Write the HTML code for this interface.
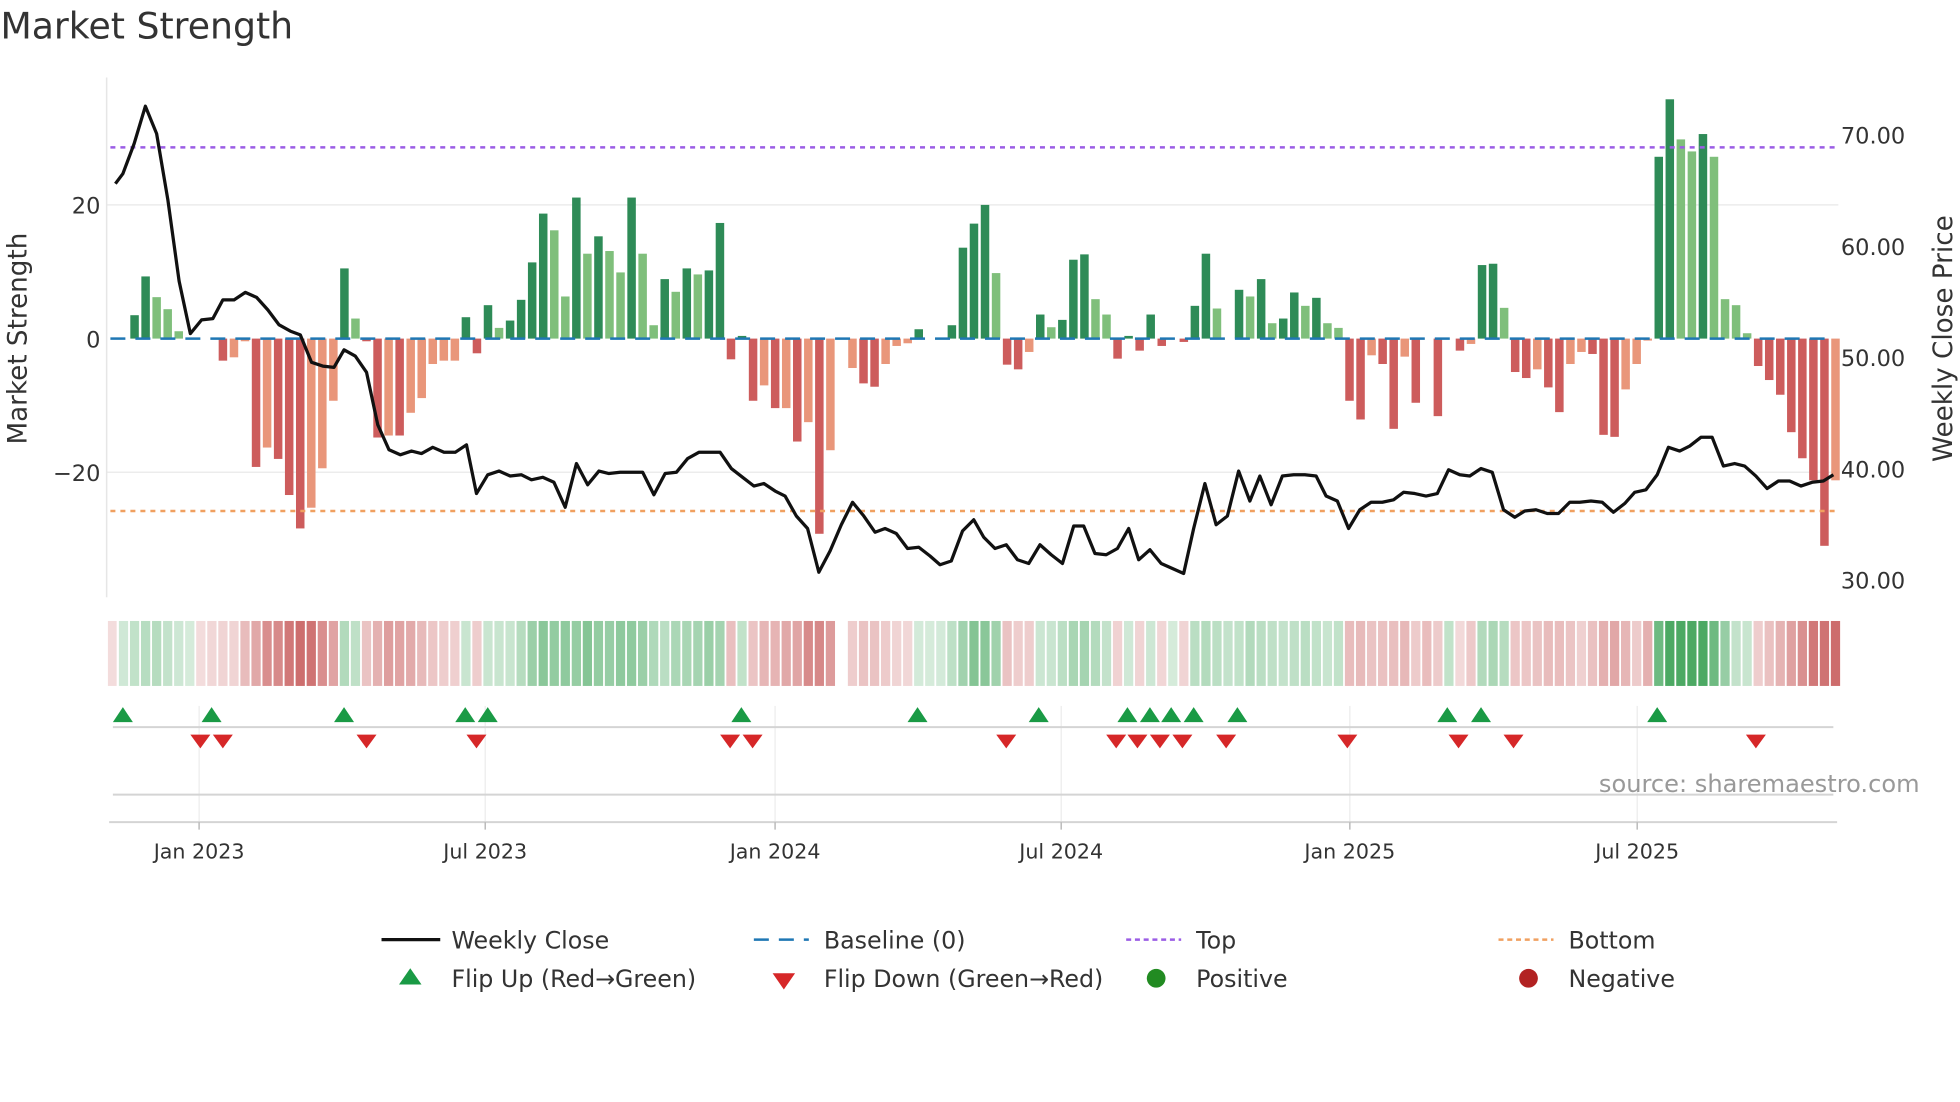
<!DOCTYPE html>
<html><head><meta charset="utf-8"><style>
html,body{margin:0;padding:0;background:#fff;}
svg{display:block;}
text{font-family:"DejaVu Sans","Liberation Sans",sans-serif;fill:#333;}
</style></head><body>
<svg id="s" width="1960" height="1102" viewBox="0 0 1568 882" xmlns="http://www.w3.org/2000/svg">
<text x="0" y="31" font-size="29">Market Strength</text>
<line x1="85" y1="164" x2="1471" y2="164" stroke="#ececec" stroke-width="1.2"/>
<line x1="85" y1="378" x2="1471" y2="378" stroke="#ececec" stroke-width="1.2"/>
<line x1="85" y1="62" x2="85" y2="478" stroke="#e6e6e6" stroke-width="1.2"/>
<g id="bars"></g>
<line x1="88" y1="271" x2="1468" y2="271" stroke="#1f77b4" stroke-width="2" stroke-dasharray="12,8"/>
<line x1="88" y1="118" x2="1468" y2="118" stroke="#9b5de5" stroke-width="2" stroke-dasharray="4,4"/>
<line x1="88" y1="409" x2="1468" y2="409" stroke="#f0a060" stroke-width="2" stroke-dasharray="4,4"/>
<polyline id="price" fill="none" stroke="#111" stroke-width="2.6" stroke-linejoin="round" points=""/>
<text x="80" y="171" font-size="18" text-anchor="end">20</text>
<text x="80" y="278" font-size="18" text-anchor="end">0</text>
<text x="80" y="385" font-size="18" text-anchor="end">−20</text>
<text x="1473" y="115" font-size="18">70.00</text>
<text x="1473" y="204" font-size="18">60.00</text>
<text x="1473" y="293" font-size="18">50.00</text>
<text x="1473" y="382" font-size="18">40.00</text>
<text x="1473" y="471" font-size="18">30.00</text>
<text transform="translate(21,271) rotate(-90)" font-size="21" text-anchor="middle">Market Strength</text>
<text transform="translate(1562,271) rotate(-90)" font-size="21" text-anchor="middle">Weekly Close Price</text>
<g id="strip"></g>
<g stroke="#ececec" stroke-width="1">
<line x1="159" y1="565" x2="159" y2="658"/><line x1="388" y1="565" x2="388" y2="658"/>
<line x1="620" y1="565" x2="620" y2="658"/><line x1="849" y1="565" x2="849" y2="658"/>
<line x1="1080" y1="565" x2="1080" y2="658"/><line x1="1310" y1="565" x2="1310" y2="658"/>
</g>
<line x1="90" y1="582" x2="1467" y2="582" stroke="#d4d4d4" stroke-width="1.6"/>
<line x1="90" y1="636" x2="1467" y2="636" stroke="#d4d4d4" stroke-width="1.6"/>
<line x1="87" y1="658" x2="1470" y2="658" stroke="#d4d4d4" stroke-width="1.6"/>
<g stroke="#bbb" stroke-width="1.2">
<line x1="159" y1="658" x2="159" y2="664"/><line x1="388" y1="658" x2="388" y2="664"/>
<line x1="620" y1="658" x2="620" y2="664"/><line x1="849" y1="658" x2="849" y2="664"/>
<line x1="1080" y1="658" x2="1080" y2="664"/><line x1="1310" y1="658" x2="1310" y2="664"/>
</g>
<g id="flips"></g>
<text x="1536" y="634" font-size="19.3" text-anchor="end" style="fill:#999">source: sharemaestro.com</text>
<g font-size="16.5" text-anchor="middle">
<text x="159" y="687">Jan 2023</text><text x="388" y="687">Jul 2023</text>
<text x="620" y="687">Jan 2024</text><text x="849" y="687">Jul 2024</text>
<text x="1080" y="687">Jan 2025</text><text x="1310" y="687">Jul 2025</text>
</g>
<line x1="305" y1="752" x2="352" y2="752" stroke="#111" stroke-width="2.6"/>
<text x="361" y="759" font-size="19">Weekly Close</text>
<line x1="603" y1="752" x2="647" y2="752" stroke="#1f77b4" stroke-width="2" stroke-dasharray="12,8"/>
<text x="659" y="759" font-size="19">Baseline (0)</text>
<line x1="901" y1="752" x2="945" y2="752" stroke="#9b5de5" stroke-width="2" stroke-dasharray="4,3"/>
<text x="957" y="759" font-size="19">Top</text>
<line x1="1199" y1="752" x2="1243" y2="752" stroke="#f0a060" stroke-width="2" stroke-dasharray="4,3"/>
<text x="1255" y="759" font-size="19">Bottom</text>
<polygon points="328,775 337,788 319,788" fill="#1a9a45"/>
<text x="361" y="790" font-size="19">Flip Up (Red→Green)</text>
<polygon points="618,779 636,779 627,792" fill="#d62728"/>
<text x="659" y="790" font-size="19">Flip Down (Green→Red)</text>
<circle cx="925" cy="783" r="7.5" fill="#228b22"/>
<text x="957" y="790" font-size="19">Positive</text>
<circle cx="1223" cy="783" r="7.5" fill="#b22222"/>
<text x="1255" y="790" font-size="19">Negative</text>
</svg>
<script>
var NS="http://www.w3.org/2000/svg";
function el(t,a,p){var e=document.createElementNS(NS,t);for(var k in a)e.setAttribute(k,a[k]);document.getElementById(p).appendChild(e);return e;}
var D=[[0,'g'],[3.5,'g'],[9.3,'g'],[6.2,'l'],[4.4,'l'],[1.1,'l'],[0,'g'],[0,'g'],[0,'g'],[-3.3,'r'],[-2.8,'s'],[-0.4,'s'],[-19.2,'r'],[-16.3,'s'],[-18,'r'],[-23.4,'r'],[-28.4,'r'],[-25.3,'s'],[-19.4,'s'],[-9.3,'s'],
[10.5,'g'],[3,'l'],[-0.4,'r'],[-14.8,'r'],[-14.5,'s'],[-14.5,'r'],[-11.1,'s'],[-8.9,'s'],[-3.8,'s'],[-3.3,'s'],[-3.3,'s'],[3.2,'g'],[-2.2,'r'],[5,'g'],[1.6,'l'],[2.7,'g'],[5.8,'g'],[11.4,'g'],[18.7,'g'],[16.2,'l'],
[6.3,'l'],[21.1,'g'],[12.7,'l'],[15.3,'g'],[13.1,'l'],[9.9,'l'],[21.1,'g'],[12.7,'l'],[2,'l'],[8.9,'g'],[7,'l'],[10.5,'g'],[9.6,'l'],[10.2,'g'],[17.3,'g'],[-3.1,'r'],[0.4,'g'],[-9.3,'r'],[-7,'s'],[-10.4,'r'],
[-10.4,'s'],[-15.4,'r'],[-12.5,'s'],[-29.2,'r'],[-16.7,'s'],[0,'g'],[-4.4,'s'],[-6.7,'r'],[-7.2,'r'],[-3.8,'s'],[-1.1,'s'],[-0.7,'s'],[1.4,'g'],[0,'g'],[0,'g'],[2,'g'],[13.6,'g'],[17.2,'g'],[20,'g'],[9.8,'l'],
[-3.9,'r'],[-4.6,'r'],[-2,'s'],[3.6,'g'],[1.7,'l'],[2.8,'g'],[11.8,'g'],[12.6,'g'],[5.9,'l'],[3.6,'l'],[-3,'r'],[0.4,'g'],[-1.8,'r'],[3.6,'g'],[-1.1,'r'],[0,'g'],[-0.5,'r'],[4.9,'g'],[12.7,'g'],[4.5,'l'],
[0,'g'],[7.3,'g'],[6.3,'l'],[8.9,'g'],[2.3,'l'],[3,'g'],[6.9,'g'],[4.9,'l'],[6.1,'g'],[2.3,'l'],[1.6,'l'],[-9.3,'r'],[-12.1,'r'],[-2.5,'s'],[-3.8,'r'],[-13.5,'r'],[-2.7,'s'],[-9.6,'r'],[0,'g'],[-11.6,'r'],
[0,'g'],[-1.8,'r'],[-0.8,'s'],[11,'g'],[11.2,'g'],[4.6,'l'],[-5,'r'],[-5.9,'r'],[-4.6,'s'],[-7.3,'r'],[-11,'r'],[-3.8,'s'],[-2,'s'],[-2.3,'r'],[-14.4,'r'],[-14.7,'r'],[-7.6,'s'],[-3.8,'s'],[-0.3,'s'],[27.2,'g'],
[35.8,'g'],[29.8,'l'],[28,'l'],[30.6,'g'],[27.2,'l'],[5.9,'l'],[5,'l'],[0.8,'l'],[-4.1,'r'],[-6.2,'r'],[-8.4,'r'],[-14,'r'],[-17.9,'r'],[-21.2,'r'],[-31,'r'],[-21.2,'s']];
var C={g:'#2e8b57',l:'#7fbf7b',r:'#cd5c5c',s:'#e9967a'};
var X0=98.5,SP=8.84,K=5.35;
D.forEach(function(d,i){var v=d[0];if(v==0)return;var h=Math.abs(v)*K;var x=X0+i*SP-3.4;
el('rect',{x:x,y:v>0?271-h:271,width:6.8,height:h,fill:C[d[1]]},'bars');});
var G=[[0,6],[20,21],[31,31],[33,54],[56,56],[72,79],[83,89],[91,91],[93,93],[95,95],[97,110],[120,120],[123,125],[139,147]];
function isG(i){for(var k=0;k<G.length;k++)if(i>=G[k][0]&&i<=G[k][1])return true;return false;}
for(var i=0;i<D.length;i++){if(i==65)continue;
var m=0,n=0;for(var j=i-1;j<=i+1;j++){if(j>=0&&j<D.length){m+=Math.abs(D[j][0]);n++;}}m=m/n;
var a=0.2+0.7*Math.min(1,m/28);var g=isG(i);
el('rect',{x:X0+i*SP-3.7,y:497,width:7.4,height:52,fill:g?'rgb(56,160,82)':'rgb(196,82,82)','fill-opacity':a.toFixed(2)},'strip');}
el('rect',{x:86,y:497,width:7,height:52,fill:'rgb(196,82,82)','fill-opacity':0.2},'strip');
var P="92,147 98,139 107,115 116,85 125,107 134,160 143,225 152,267 161,256 170,255 178,240 187,240 196,234 205,238 214,248 223,260 232,265 240,268 249,290 258,293 267,294 275,280 284,285 293,298 302,340 311,360 320,364 329,361 337,363 346,358 355,362 364,362 373,356 381,395 390,380 399,377 408,381 417,380 425,384 434,382 443,386 452,406 461,371 470,388 479,377 487,379 496,378 505,378 514,378 523,396 532,379 541,378 550,367 559,362 567,362 576,362 585,375 594,382 603,389 611,387 620,393 628,397 637,413 646,423 655,458 664,441 673,420 682,402 691,413 700,426 708,423 717,427 726,439 735,438 744,445 752,452 761,449 770,425 779,416 787,430 796,439 805,436 814,448 823,451 832,436 841,444 850,451 859,421 867,421 876,443 885,444 894,439 903,423 911,448 920,440 929,451 938,455 947,459 955,423 964,387 973,420 982,413 991,377 1000,401 1008,381 1017,404 1026,381 1035,380 1044,380 1053,381 1061,397 1070,401 1079,423 1088,408 1097,402 1106,402 1115,400 1123,394 1132,395 1141,397 1150,395 1159,376 1168,380 1176,381 1185,375 1194,378 1203,408 1212,414 1220,409 1229,408 1238,411 1247,411 1256,402 1264,402 1273,401 1282,402 1291,410 1300,403 1308,394 1317,392 1326,380 1335,358 1344,361 1352,357 1361,350 1370,350 1379,373 1388,371 1396,373 1405,381 1414,391 1423,385 1432,385 1441,389 1450,386 1459,385 1467,380";
document.getElementById('price').setAttribute('points',P);
[98,169,275,372,390,593,734,831,902,920,937,955,990,1158,1185,1326].forEach(function(x){el('polygon',{points:(x)+',566 '+(x+8)+',578 '+(x-8)+',578',fill:'#1a9a45'},'flips');});
[160,178,293,381,584,602,805,893,910,928,946,981,1078,1167,1211,1405].forEach(function(x){el('polygon',{points:(x-8)+',588 '+(x+8)+',588 '+x+',599',fill:'#d62728'},'flips');});
</script>
</body></html>
